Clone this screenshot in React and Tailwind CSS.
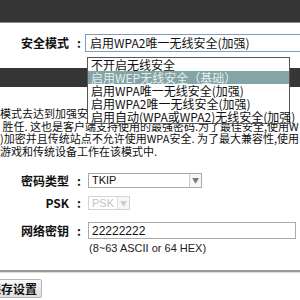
import React from 'react';

const modes = [
    '不开启无线安全',
    '启用WEP无线安全（基础）',
    '启用WPA唯一无线安全(加强)',
    '启用WPA2唯一无线安全(加强)',
    '启用自动(WPA或WPA2)无线安全(加强)'
];

const Label = ({ children }) => (
    <div className="w-[84px] shrink-0 flex justify-end items-center pr-[3px] font-bold text-[12px] leading-none whitespace-nowrap">
        <span>{children}</span>
        <span className="ml-[8px]">:</span>
    </div>
);

const Arrow = ({ dim }) => (
    <div className={`w-[12px] h-full flex items-center justify-center border-l ${dim ? 'border-[#ddd] text-[#ccc]' : 'border-[#ccc] text-[#777]'} bg-[#f6f6f6] text-[7px]`}>▼</div>
);

export default function App() {
    return (
        <div className="relative w-[300px] h-[300px] overflow-hidden bg-white text-[#111] font-['Noto_Sans_CJK_SC',sans-serif]">
            <div className="h-[23px] bg-[#363636] border-b border-[#8a8a8a]" />

            <div className="h-[45px] flex items-center pb-[6px]">
                <Label>安全模式</Label>
                <div className="flex-1 h-[18px] ml-[1px] -mr-[4px] border border-[#7f9db9] bg-white pl-[4px] flex items-center text-[12px] leading-none whitespace-nowrap">
                    启用WPA2唯一无线安全(加强)
                </div>
            </div>

            <div className="h-[19px] bg-[#363636]" />

            <div className="pt-[20px] text-[11px] leading-[12.5px] whitespace-nowrap">
                <p>模式去达到加强安</p>
                <p>&nbsp;胜任. 这也是客户端支持使用的最强密码.为了最佳安全,使用W</p>
                <p>)加密并且传统站点不允许使用WPA安全. 为了最大兼容性,使用</p>
                <p>游戏和传统设备工作在该模式中.</p>
            </div>

            <div className="mt-[16px] flex items-center h-[15px]">
                <Label>密码类型</Label>
                <div className="ml-[4px] w-[114px] h-full border border-[#aaa] flex items-center">
                    <span className="flex-1 pl-[3px] text-[11px] leading-none font-['Liberation_Sans',sans-serif]">TKIP</span>
                    <Arrow />
                </div>
            </div>

            <div className="mt-[8px] flex items-center h-[14px]">
                <Label>PSK</Label>
                <div className="ml-[4px] w-[42px] h-full border border-[#d4d4d4] flex items-center">
                    <span className="flex-1 pl-[3px] text-[11px] leading-none text-[#c4c4c4] font-['Liberation_Sans',sans-serif]">PSK</span>
                    <Arrow dim />
                </div>
            </div>

            <div className="mt-[12px] flex items-center h-[17px]">
                <Label>网络密钥</Label>
                <div className="ml-[4px] w-[208px] h-full border border-[#aaa] flex items-center pl-[3px] text-[12px] leading-none font-['Liberation_Sans',sans-serif]">
                    22222222
                </div>
            </div>

            <div className="mt-[2px] h-[14px] pl-[89px] flex items-center text-[11px] leading-none font-['Liberation_Sans',sans-serif] text-[#222]">
                (8~63 ASCII or 64 HEX)
            </div>

            <div className="mt-[15px] h-[3px] border-t-2 border-[#9a9a9a] border-b border-b-[#dcdcdc]" />

            <div className="mt-[6px] flex">
                <button className="-ml-[17px] h-[19px] pl-[5px] pr-[4px] border border-[#b5b5b5] rounded-[2px] bg-gradient-to-b from-[#fafafa] to-[#dedede] text-[12px] font-bold leading-none">
                    保存设置
                </button>
            </div>

            <ul className="absolute left-[87px] top-[57px] w-[203px] border border-[#555] bg-white text-[12px] leading-[13px] whitespace-nowrap">
                {modes.map((m, i) => (
                    <li key={m} className={`pl-[3px] ${i === 1 ? 'bg-[#83a5a5] text-[#e6eeee]' : ''}`}>{m}</li>
                ))}
            </ul>
        </div>
    );
}
